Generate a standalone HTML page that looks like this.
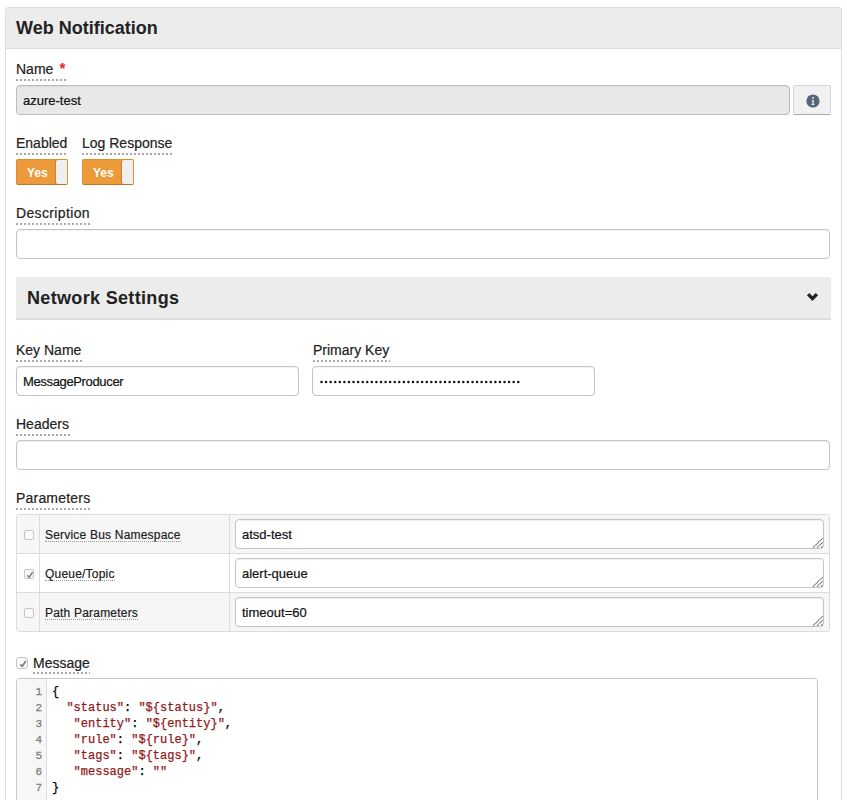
<!DOCTYPE html>
<html><head><meta charset="utf-8">
<style>
*{box-sizing:border-box;margin:0;padding:0}
html,body{width:847px;height:800px;overflow:hidden;background:#fff;font-family:"Liberation Sans",sans-serif;color:#222}
.lbl,.itxt,.plbl{-webkit-text-stroke:0.2px currentColor}
.abs{position:absolute}
.panel{position:absolute;left:5px;top:7px;width:837px;height:820px;border:1px solid #ddd;border-radius:3px}
.hdr{position:absolute;left:6px;top:8px;width:835px;height:41px;background:#ececec;border-bottom:1px solid #ddd}
.title{position:absolute;font-weight:bold;font-size:18px;line-height:18px;color:#222;white-space:nowrap}
.lbl{position:absolute;font-size:14px;line-height:14px;color:#222;white-space:nowrap}
.dot{position:absolute;height:2px;background-image:linear-gradient(to right,#aaa 0,#aaa 2px,transparent 2px);background-size:4px 2px}
.inp{position:absolute;border:1px solid #c4c4c4;border-radius:4px;background:#fff;box-shadow:inset 0 1px 1px rgba(0,0,0,.06)}
.itxt{position:absolute;font-size:13px;line-height:13px;color:#111;white-space:nowrap}
.tgl{position:absolute;width:52px;height:26px;background:#ec9a3a;border:1px solid #df8f33;border-bottom-color:#c27626;border-radius:2px}
.tgl .y{position:absolute;left:10px;top:7px;font-weight:bold;font-size:12px;line-height:12px;color:#fff}
.tgl .h{position:absolute;right:0;top:0;width:11px;height:24px;background:#efefef;border-radius:2px 1px 1px 2px;box-shadow:-1px 0 1px rgba(0,0,0,.15)}
.cb{position:absolute;width:10px;height:10px;border:1px solid #c6c6c6;border-radius:2px;background:#fafafa}
.plbl{position:absolute;font-size:12px;line-height:12px;letter-spacing:0.2px;color:#222;white-space:nowrap;border-bottom:1px dotted #999;padding-bottom:0}
.code{font-family:"Liberation Mono",monospace;font-size:12px;line-height:16px;white-space:pre;-webkit-text-stroke:0.25px currentColor}
.code .s{color:#921a1a}
</style></head><body>
<div class="panel"></div>
<div class="hdr"></div>
<div class="title" style="left:16px;top:19px">Web Notification</div>

<div class="lbl" style="left:16px;top:62px">Name <span style="color:#e8261e;font-size:14px;font-weight:bold;position:relative;top:-1px;left:2.5px">*</span></div>
<div class="dot" style="left:16px;top:79px;width:50px"></div>
<div class="inp" style="left:16px;top:85px;width:774px;height:30px;background:#e8e8e8;border-color:#bdbdbd"></div>
<div class="itxt" style="left:23px;top:94px">azure-test</div>
<div class="abs" style="left:793px;top:85px;width:38px;height:30px;background:#f1f1f1;border:1px solid #d4d4d4;border-bottom-color:#aaa;border-radius:2px"></div>
<svg class="abs" style="left:806px;top:94px" width="14" height="14" viewBox="0 0 14 14"><circle cx="7" cy="7" r="6.6" fill="#56677d"/><path d="M6.4 6 H7.6 V10.4 H6.4 Z M5.6 10.2 H8.4 V10.9 H5.6 Z M5.8 6 H6.6 V6.6 H5.8 Z" fill="#fff"/><circle cx="7" cy="3.9" r="0.9" fill="#fff"/></svg>

<div class="lbl" style="left:16px;top:136px">Enabled</div>
<div class="dot" style="left:16px;top:153px;width:52px"></div>
<div class="lbl" style="left:82px;top:136px">Log Response</div>
<div class="dot" style="left:82px;top:153px;width:90px"></div>
<div class="tgl" style="left:16px;top:159px"><span class="y">Yes</span><span class="h"></span></div>
<div class="tgl" style="left:82px;top:159px"><span class="y">Yes</span><span class="h"></span></div>

<div class="lbl" style="left:16px;top:206px;letter-spacing:0.36px">Description</div>
<div class="dot" style="left:16px;top:223px;width:74px"></div>
<div class="inp" style="left:16px;top:229px;width:814px;height:30px"></div>

<div class="abs" style="left:16px;top:277px;width:815px;height:43px;background:#ececec;border-bottom:2px solid #dcdcdc"></div>
<div class="title" style="left:27px;top:289px;letter-spacing:0.33px">Network Settings</div>
<svg class="abs" style="left:806px;top:292px" width="13" height="10" viewBox="0 0 13 10"><path d="M0.9 3.3 L3.3 0.9 L6.5 4.3 L9.7 0.9 L12.1 3.3 L6.5 8.9 Z" fill="#222"/></svg>

<div class="lbl" style="left:16px;top:343px">Key Name</div>
<div class="dot" style="left:16px;top:360px;width:66px"></div>
<div class="inp" style="left:16px;top:366px;width:283px;height:30px"></div>
<div class="itxt" style="left:23px;top:375px;letter-spacing:-0.35px">MessageProducer</div>
<div class="lbl" style="left:313px;top:343px">Primary Key</div>
<div class="dot" style="left:313px;top:360px;width:77px"></div>
<div class="inp" style="left:312px;top:366px;width:283px;height:30px"></div>
<svg class="abs" style="left:320px;top:380px" width="205" height="4" viewBox="0 0 205 4" fill="#111"><circle cx="1.50" cy="2" r="1.25"/><circle cx="6.08" cy="2" r="1.25"/><circle cx="10.65" cy="2" r="1.25"/><circle cx="15.23" cy="2" r="1.25"/><circle cx="19.80" cy="2" r="1.25"/><circle cx="24.38" cy="2" r="1.25"/><circle cx="28.95" cy="2" r="1.25"/><circle cx="33.52" cy="2" r="1.25"/><circle cx="38.10" cy="2" r="1.25"/><circle cx="42.68" cy="2" r="1.25"/><circle cx="47.25" cy="2" r="1.25"/><circle cx="51.83" cy="2" r="1.25"/><circle cx="56.40" cy="2" r="1.25"/><circle cx="60.98" cy="2" r="1.25"/><circle cx="65.55" cy="2" r="1.25"/><circle cx="70.12" cy="2" r="1.25"/><circle cx="74.70" cy="2" r="1.25"/><circle cx="79.28" cy="2" r="1.25"/><circle cx="83.85" cy="2" r="1.25"/><circle cx="88.42" cy="2" r="1.25"/><circle cx="93.00" cy="2" r="1.25"/><circle cx="97.58" cy="2" r="1.25"/><circle cx="102.15" cy="2" r="1.25"/><circle cx="106.73" cy="2" r="1.25"/><circle cx="111.30" cy="2" r="1.25"/><circle cx="115.88" cy="2" r="1.25"/><circle cx="120.45" cy="2" r="1.25"/><circle cx="125.03" cy="2" r="1.25"/><circle cx="129.60" cy="2" r="1.25"/><circle cx="134.18" cy="2" r="1.25"/><circle cx="138.75" cy="2" r="1.25"/><circle cx="143.33" cy="2" r="1.25"/><circle cx="147.90" cy="2" r="1.25"/><circle cx="152.47" cy="2" r="1.25"/><circle cx="157.05" cy="2" r="1.25"/><circle cx="161.62" cy="2" r="1.25"/><circle cx="166.20" cy="2" r="1.25"/><circle cx="170.78" cy="2" r="1.25"/><circle cx="175.35" cy="2" r="1.25"/><circle cx="179.93" cy="2" r="1.25"/><circle cx="184.50" cy="2" r="1.25"/><circle cx="189.08" cy="2" r="1.25"/><circle cx="193.65" cy="2" r="1.25"/><circle cx="198.22" cy="2" r="1.25"/></svg>

<div class="lbl" style="left:16px;top:417px">Headers</div>
<div class="dot" style="left:16px;top:434px;width:54px"></div>
<div class="inp" style="left:16px;top:440px;width:814px;height:30px"></div>

<div class="lbl" style="left:16px;top:491px;letter-spacing:0.2px">Parameters</div>
<div class="dot" style="left:16px;top:508px;width:75px"></div>


<div class="abs" style="left:16px;top:514px;width:814px;height:118px;border:1px solid #dcdcdc;border-radius:3px;overflow:hidden">
 <div class="abs" style="left:0;top:0;width:812px;height:39px;background:#f6f6f6;border-bottom:1px solid #dcdcdc"></div>
 <div class="abs" style="left:0;top:39px;width:812px;height:39px;background:#fff;border-bottom:1px solid #dcdcdc"></div>
 <div class="abs" style="left:0;top:78px;width:812px;height:39px;background:#f6f6f6"></div>
 <div class="abs" style="left:22px;top:0;width:1px;height:118px;background:#dcdcdc"></div>
 <div class="abs" style="left:212px;top:0;width:1px;height:118px;background:#dcdcdc"></div>
</div>
<div class="cb" style="left:24px;top:530px"></div>
<div class="cb" style="left:24px;top:569px"><svg width="10" height="10" viewBox="0 0 10 10" style="position:absolute;left:-1px;top:-1px"><path d="M3.3 6.2 L5.2 8.3 L8.6 3.2" fill="none" stroke="#7a7a7a" stroke-width="1.5"/></svg></div>
<div class="cb" style="left:24px;top:608px"></div>
<div class="plbl" style="left:45px;top:529px">Service Bus Namespace</div>
<div class="plbl" style="left:45px;top:568px">Queue/Topic</div>
<div class="plbl" style="left:45px;top:607px">Path Parameters</div>
<div class="inp ta" style="left:235px;top:519px;width:589px;height:30px"></div>
<div class="inp ta" style="left:235px;top:558px;width:589px;height:30px"></div>
<div class="inp ta" style="left:235px;top:597px;width:589px;height:30px"></div>
<svg class="abs" style="left:812px;top:537px" width="12" height="12" viewBox="0 0 12 12" stroke="#555" stroke-width="1.1" stroke-dasharray="1.2 0.6"><path d="M1.2 10.6 L10.7 1.1 M5.2 10.6 L10.7 5.1 M9.2 10.6 L10.7 9.1"/></svg><svg class="abs" style="left:812px;top:576px" width="12" height="12" viewBox="0 0 12 12" stroke="#555" stroke-width="1.1" stroke-dasharray="1.2 0.6"><path d="M1.2 10.6 L10.7 1.1 M5.2 10.6 L10.7 5.1 M9.2 10.6 L10.7 9.1"/></svg><svg class="abs" style="left:812px;top:615px" width="12" height="12" viewBox="0 0 12 12" stroke="#555" stroke-width="1.1" stroke-dasharray="1.2 0.6"><path d="M1.2 10.6 L10.7 1.1 M5.2 10.6 L10.7 5.1 M9.2 10.6 L10.7 9.1"/></svg>
<div class="itxt" style="left:242px;top:528px">atsd-test</div>
<div class="itxt" style="left:242px;top:567px">alert-queue</div>
<div class="itxt" style="left:242px;top:606px">timeout=60</div>

<div class="cb" style="left:16px;top:657px;width:12px;height:12px;border-radius:3px"><svg width="12" height="12" viewBox="0 0 12 12" style="position:absolute;left:-1px;top:-1px"><path d="M4.3 7.4 L6.2 9.5 L9.8 4" fill="none" stroke="#7a7a7a" stroke-width="1.6"/></svg></div>
<div class="lbl" style="left:33px;top:656px">Message</div>
<div class="dot" style="left:33px;top:672px;width:57px"></div>

<div class="abs" style="left:16px;top:678px;width:802px;height:140px;border:1px solid #c8c8c8;border-radius:4px;overflow:hidden;background:#fff">
 <div class="abs" style="left:0;top:0;width:30px;height:140px;background:#f7f7f7;border-right:1px solid #ddd"></div>
</div>
<div class="code abs" style="left:22px;top:684px;width:20px;text-align:right;color:#7f7f7f;font-size:11px;-webkit-text-stroke:0.3px #7f7f7f">1<br>2<br>3<br>4<br>5<br>6<br>7</div>
<div class="code abs" style="left:52px;top:684px;color:#000"><span>{</span><br>  <span class="s">"status"</span>: <span class="s">"${status}"</span>,<br>   <span class="s">"entity"</span>: <span class="s">"${entity}"</span>,<br>   <span class="s">"rule"</span>: <span class="s">"${rule}"</span>,<br>   <span class="s">"tags"</span>: <span class="s">"${tags}"</span>,<br>   <span class="s">"message"</span>: <span class="s">""</span><br>}</div>
</body></html>
